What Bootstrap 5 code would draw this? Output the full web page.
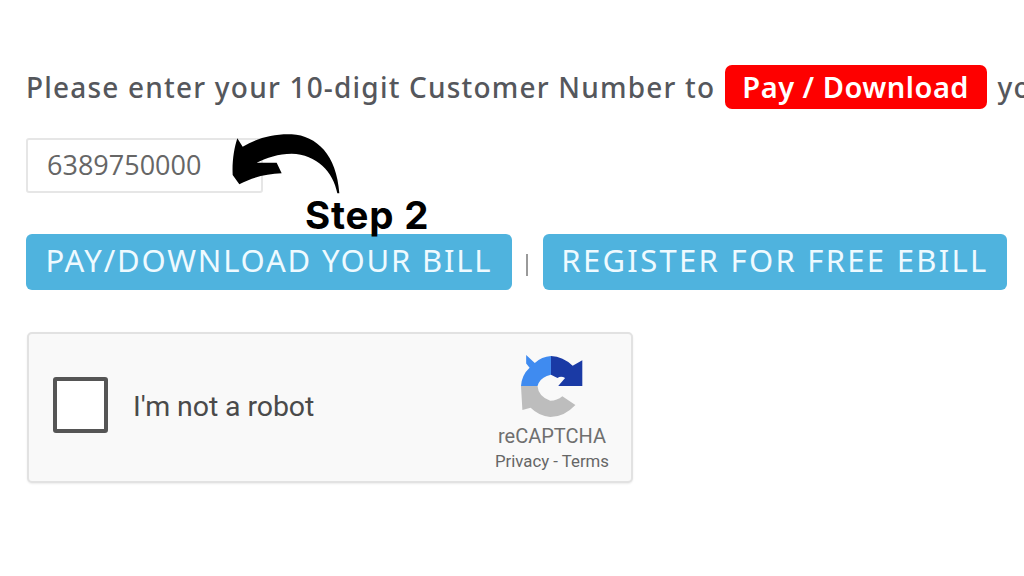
<!DOCTYPE html>
<html lang="en">
<head>
<meta charset="utf-8">
<title>Pay / Download your bill</title>
<link rel="stylesheet" href="https://cdn.jsdelivr.net/npm/bootstrap@5.3.0/dist/css/bootstrap.min.css">
<style>
html,body{width:1024px;height:576px;overflow:hidden;background:#fff}
.stage{position:relative;width:1024px;height:576px;padding:65px 0 0 26px;overflow:hidden}
.intro{font-family:"Noto Sans",sans-serif;font-weight:500;font-size:28px;line-height:44px;height:44px;color:#55575c;letter-spacing:1.2px;white-space:nowrap}
.tag{display:inline-block;height:44px;line-height:44px;padding:0 17.5px;margin:0 11px 0 1px;background:#fe0000;color:#fff;border-radius:7px;font-weight:600;font-size:29px;letter-spacing:.5px;vertical-align:top}
.num-field{width:237px;height:55px;margin-top:29px;border:2px solid #e6e6e6;border-radius:3px;padding:0 19px 2px;font-family:"Open Sans",sans-serif;font-size:27px;color:#666;background:#fff;box-shadow:none}
.action-row{margin-top:41px}
.act-btn{height:56px;border:0;border-radius:6px;background:#4fb3de;color:#eefaff;font-family:"Noto Sans",sans-serif;font-size:31px;line-height:52px;padding:0 0 4px;white-space:nowrap;text-align:center}
.act-btn:hover{background:#4fb3de;color:#eefaff}
.act-one{width:486px;letter-spacing:1.8px}
.act-two{width:464px;letter-spacing:2.3px}
.divider{width:2px;height:22px;background:#9a9a9a;margin:0 15px 0 14px;flex:none;transform:translateY(3px)}
.captcha{width:606px;height:151px;margin:42px 0 0 1px;background:#f9f9f9;border:2px solid #e2e2e2;border-radius:5px;box-shadow:0 1px 2px rgba(0,0,0,.08);padding:0 20px 6px 24px}
.tick-box{width:55px;height:56px;border:4px solid #555;border-radius:3px;background:#fff;margin-right:25px;flex:none}
.robot{font-family:Roboto,sans-serif;font-size:28.5px;color:#4a4a4a;transform:translateY(3px);letter-spacing:-.1px}
.brand{width:118px;text-align:center;margin-top:21px;color:#666;font-family:Roboto,sans-serif}
.brand svg{display:block;margin:0 auto;width:62px;height:62px}
.brand-name{font-size:20px;line-height:20px;margin-top:9px;color:#6f6f6f}
.brand-links{font-size:16.8px;line-height:18px;margin-top:6px;color:#666;white-space:nowrap}
.curve{position:absolute;left:220px;top:125px;width:130px;height:75px}
.step{position:absolute;left:305px;top:191px;font-family:"Inter","Liberation Sans",sans-serif;font-weight:700;font-size:38.5px;line-height:48px;letter-spacing:.8px;color:#000;white-space:nowrap}
</style>
</head>
<body>
<main class="stage">
  <p class="intro mb-0">Please enter your 10-digit Customer Number to <span class="tag">Pay / Download</span>your bill</p>
  <input class="form-control num-field" type="text" value="6389750000" aria-label="Customer Number">
  <div class="d-flex align-items-center action-row">
    <button class="btn act-btn act-one" type="button">PAY/DOWNLOAD YOUR BILL</button>
    <span class="divider"></span>
    <button class="btn act-btn act-two" type="button">REGISTER FOR FREE EBILL</button>
  </div>
  <div class="captcha d-flex align-items-start">
    <div class="d-flex align-items-center align-self-center flex-grow-1">
      <span class="tick-box"></span>
      <span class="robot">I'm not a robot</span>
    </div>
    <div class="brand">
      <svg viewBox="130 45 180 180" aria-hidden="true">
        <path fill="#3f8bf0" d="M145 45L170 68Q190 50 217 48L217 102L205 106Q184 114 178 135L130 135Q132 103 155 82L145 70Z"/>
        <path fill="#1a3aa5" d="M217 48Q252 50 280 76L308 60L308 135L238 135L258 112Q246 104 236 112L217 102Z"/>
        <path fill="#bdbdbd" d="M130 135L178 135Q180 165 215 178Q235 178 250 165L288 190Q255 225 215 225Q182 222 158 198L134 205Z"/>
      </svg>
      <div class="brand-name">reCAPTCHA</div>
      <div class="brand-links">Privacy - Terms</div>
    </div>
  </div>
  <svg class="curve" viewBox="0 0 390 225" aria-hidden="true">
    <path fill="#000" d="M52 40L68 65C110 40 160 26 215 28C290 32 350 90 358 205L352 205C340 140 290 88 215 86C175 86 140 98 110 113L170 113L185 145C140 148 100 155 58 178L38 150C36 110 42 70 52 40Z"/>
  </svg>
  <div class="step">Step 2</div>
</main>
<script src="https://cdn.jsdelivr.net/npm/bootstrap@5.3.0/dist/js/bootstrap.bundle.min.js"></script>
</body>
</html>
